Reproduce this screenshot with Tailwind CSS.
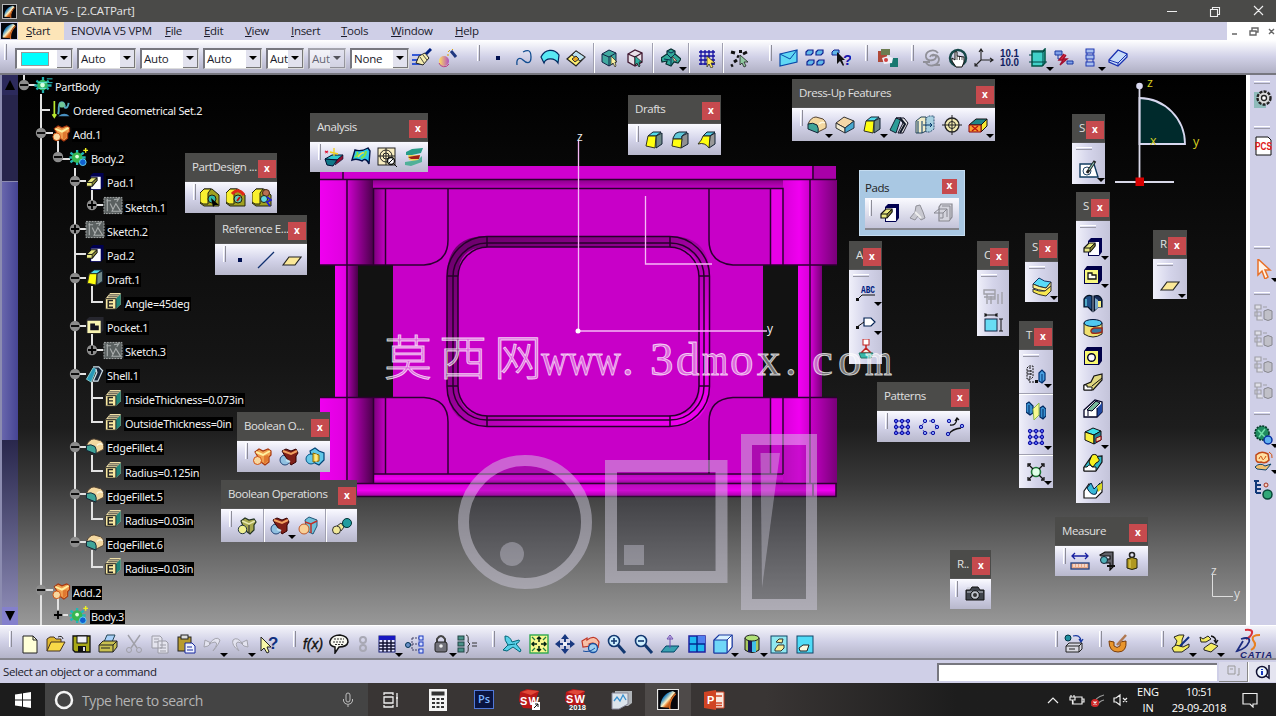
<!DOCTYPE html>
<html lang="en">
<head>
  <meta charset="UTF-8">
  <meta name="viewport" content="width=device-width, initial-scale=1.0">
  <title>CATIA V5 - [2.CATPart]</title>
  <script src="https://cdn.jsdelivr.net/npm/@tailwindcss/browser@4"></script>
</head>
<body class="bg-black overflow-hidden">

<!-- icon sprite -->
<svg class="absolute w-0 h-0" xmlns="http://www.w3.org/2000/svg">
  <defs>
    <linearGradient id="orb"><stop offset="0" stop-color="#ffe060"/><stop offset="1" stop-color="#b050c0"/></linearGradient>
    <linearGradient id="flame" x1="0" y1="0" x2="1" y2="1"><stop offset="0" stop-color="#001828"/><stop offset=".3" stop-color="#2080c0"/><stop offset=".5" stop-color="#fff0c0"/><stop offset=".62" stop-color="#e07020"/><stop offset="1" stop-color="#200800"/></linearGradient>
  </defs>
  <symbol id="app" viewBox="0 0 20 20"><rect width="20" height="20" fill="#05060c"/><path d="M2 18C2 10 6 3 15 1L18 3C13 7 11 13 12 19Z" fill="url(#flame)"/><path d="M12 20C11 13 14 8 18 4" stroke="#d86820" stroke-width="1.500" fill="none"/></symbol>
  <symbol id="brush" viewBox="0 0 20 20"><path d="M0 7H9M0 12H7M0 16H12" stroke="#0030d0" stroke-width="1.5"/><path d="M7 8L13 5L17 10L11 17L4 15Z" fill="#f4ecb0" stroke="#222"/><path d="M8 9L12 15M11 7L15 12" stroke="#222" stroke-width=".8"/><path d="M14 6L19 1" stroke="#002080" stroke-width="3"/></symbol>
  <symbol id="wand" viewBox="0 0 20 20"><circle cx="6" cy="13" r="5" fill="url(#orb)"/><path d="M1 15a5.5 5.5 0 0 0 10 1" stroke="#c04080" fill="none"/><path d="M13 3L18 9" stroke="#203880" stroke-width="3"/><path d="M10 4L12 2M9 7L11 7M14 1L15 2" stroke="#d8a000"/></symbol>
  <symbol id="dot" viewBox="0 0 20 20"><rect x="8" y="8" width="4" height="4" fill="#001050"/></symbol>
  <symbol id="curve" viewBox="0 0 20 20"><path d="M3 17C2 10 6 9 9 12S17 17 17 9S13 2 9 4" fill="none" stroke="#104c90" stroke-width="1.3"/></symbol>
  <symbol id="patch" viewBox="0 0 20 20"><path d="M1 9C5 1 14 0 19 7L18 15C15 10 6 9 4 15Z" fill="#58e8f4" stroke="#002860" stroke-width="1.2"/></symbol>
  <symbol id="diamond" viewBox="0 0 20 20"><path d="M1 11L10 3L19 9L10 18Z" fill="#fff070" stroke="#222" stroke-width="1.200"/><path d="M10 3L19 9L14 13L6 7Z" fill="#b8e0f0" stroke="#333"/><path d="M6 11L10 8L13 11L9 14Z" fill="#e8a820" stroke="#333"/></symbol>
  <symbol id="cubesel" viewBox="0 0 20 20"><path d="M3 6L10 2L17 5V14L10 18L3 14Z" fill="#40a8a0" stroke="#124" /><path d="M3 6L10 9L17 5M10 9V18" stroke="#124" fill="none"/><path d="M12 8V17L14 15L16 19L17 18L16 14H18Z" fill="#f8f0a0" stroke="#222" stroke-width=".7"/></symbol>
  <symbol id="cubewire" viewBox="0 0 20 20"><path d="M3 6L10 2L17 5V14L10 18L3 14Z" fill="#e8e0e8" stroke="#401830" stroke-width="1.3"/><path d="M3 6L10 9L17 5M10 9V18" stroke="#401830" fill="none" stroke-width="1.2"/><path d="M10 8V17L12 15L14 19L15 18L14 14H17Z" fill="#30b0a0" stroke="#111" stroke-width=".7"/></symbol>
  <symbol id="crossbody" viewBox="0 0 20 20"><path d="M0 10L6 6V3L10 1L14 3V6L20 11L17 15L13 14L10 18L5 16L6 13L1 14Z" fill="#30a898" stroke="#063030" stroke-width="1.2"/><path d="M6 3L10 5L14 3M6 6L10 10L14 6M3 11L9 12M10 10V17" stroke="#0a2c50" fill="none"/><path d="M11 8L16 13L13 13Z" fill="#f8d0b0" stroke="#222" stroke-width=".6"/></symbol>
  <symbol id="gridsel" viewBox="0 0 20 20"><path d="M4 2V17M8 2V17M12 2V17M16 2V17M2 4H18M2 8H18M2 12H18M2 16H18" stroke="#1410a0" stroke-width="1.3"/><path d="M10 8V19L12 16L14 20L16 19L14 15H18Z" fill="#ffe860" stroke="#222" stroke-width=".7"/></symbol>
  <symbol id="points" viewBox="0 0 20 20"><path d="M1 4L5 5M7 8L9 9M13 6L17 4M4 14L7 12M1 18L3 17" stroke="#111" stroke-width="3"/><rect x="9" y="2" width="3" height="3" fill="#111"/><path d="M10 7V17L12 15L14 19L16 18L14 14H18Z" fill="#90c8a0" stroke="#222" stroke-width=".8"/></symbol>
  <symbol id="mail" viewBox="0 0 20 20"><path d="M1 6L18 2V14L1 18Z" fill="#60d8f4" stroke="#0848a8" stroke-width="1.2"/><path d="M1 6L11 11L18 2" fill="none" stroke="#0848a8"/></symbol>
  <symbol id="blocks" viewBox="0 0 20 20"><g fill="#60b8e8" stroke="#102090" stroke-width="1.2"><path d="M1 4L3 2H8V5L6 7H1ZM11 4L13 2H18V5L16 7H11ZM2 14L4 12H9V15L7 17H2ZM12 14L14 12H19V15L17 17H12Z"/></g></symbol>
  <symbol id="whats" viewBox="0 0 20 20"><path d="M1 4L3 2H8V5L6 7H1Z" fill="#60b8e8" stroke="#102090"/><path d="M6 4V16L9 13L12 18L13 17L11 12H14Z" fill="#111"/><text x="12" y="17" font-family="Liberation Sans" font-weight="bold" font-size="15" fill="#1818b0">?</text></symbol>
  <symbol id="colors" viewBox="0 0 20 20"><rect x="-1" y="3" width="10" height="11" fill="#b04838"/><rect x="3" y="1" width="9" height="6" fill="#6c7c50"/><rect x="12" y="10" width="9" height="9" fill="#187870"/><path d="M4 10L10 8L15 10L14 15L6 16Z" fill="#f0f0f8"/><circle cx="8" cy="12" r="2" fill="#d04040"/></symbol>
  <symbol id="swirl" viewBox="0 0 20 20"><path d="M16 5C12 0 3 3 4 9C5 14 15 13 14 8C13 6 9 6 8 9M4 15C8 20 17 17 17 11C16 6 12 7 10 8M1 14H8M12 17H18" fill="none" stroke="#909098" stroke-width="1.8"/></symbol>
  <symbol id="hand" viewBox="0 0 20 20"><circle cx="10" cy="10" r="8" fill="none" stroke="#164848" stroke-width="2.500"/><path d="M4 10L7 12V4Q8 3 9 4V8L16 9V14L14 19H8L4 13Z" fill="#fff" stroke="#111"/><path d="M9 8V12M11.500 8V12M14 9V12" stroke="#111" stroke-width=".7"/></symbol>
  <symbol id="axis" viewBox="0 0 20 20"><path d="M7 2V12H18M7 12L1 18M5 4L7 1L9 4M16 10L19 12L16 14M1 15V18H4" fill="none" stroke="#222" stroke-width="1.1"/></symbol>
  <symbol id="tens" viewBox="0 0 20 20"><g font-family="Liberation Sans" font-weight="bold" font-size="10" fill="#102060"><text x="0" y="9" textLength="19" lengthAdjust="spacingAndGlyphs">10.1</text><text x="0" y="18" textLength="19" lengthAdjust="spacingAndGlyphs">10.0</text></g></symbol>
  <symbol id="tealbox" viewBox="0 0 20 20"><path d="M4 3H15L17 1V15L14 18H4Z" fill="#40d0c8" stroke="#054" stroke-width="1.5"/><path d="M4 4H15V18M1 7H4M1 14H19M15 4L17 2" stroke="#044" fill="none"/></symbol>
  <symbol id="cable" viewBox="0 0 20 20"><path d="M1 3H8V7H1ZM13 13H19V16H13Z" fill="#80a0e8" stroke="#1838a0"/><path d="M4 7V11H7" stroke="#1838a0" fill="none"/><path d="M10 6L5 12H9L6 17L13 11H9L12 7" stroke="#a01030" stroke-width="1.400" fill="#e03040"/></symbol>
  <symbol id="stack" viewBox="0 0 20 20"><path d="M7 4V16M13 4V16" stroke="#2038b0"/><g fill="#a8c0f0" stroke="#2038b0"><rect x="6" y="1" width="8" height="4"/><rect x="6" y="7" width="8" height="4"/><rect x="6" y="14" width="8" height="4"/></g></symbol>
  <symbol id="eraser" viewBox="0 0 20 20"><path d="M1 12L10 2L19 6V9L10 18L1 14Z" fill="#c8dcf8" stroke="#1830b0" stroke-width="1.3"/><path d="M1 12L10 15L19 6M10 15V18" fill="none" stroke="#1830b0"/></symbol>

  <symbol id="gear" viewBox="0 0 20 20"><path d="M10 1V18M3 5L16 14M3 14L16 5M1 10H19" stroke="#20b0b0" stroke-width="2.400"/><circle cx="9.500" cy="9.500" r="5.500" fill="#30b860"/><circle cx="9.500" cy="9.500" r="2.500" fill="#d8ffe0"/><path d="M5 7H14M6 13H13" stroke="#70e8e8"/><path d="M14 3H20M15 7H20" stroke="#30c8c8"/></symbol>
  <symbol id="gear2" viewBox="0 0 20 20"><path d="M8 2V18M1 5L15 15M1 15L15 5M0 10H17" stroke="#20b8b8" stroke-width="2.400"/><circle cx="8" cy="10" r="5.500" fill="#38b850"/><circle cx="8" cy="9" r="2" fill="#e0ffe0"/><circle cx="14" cy="15" r="3.500" fill="#1060d0" stroke="#60d0f0"/><path d="M17 0V5M14.500 2.500H19.500" stroke="#f0f020" stroke-width="1.500"/></symbol>
  <symbol id="ogs" viewBox="0 0 20 20"><path d="M3 1V17M1 15L3 18L5 15" stroke="#b8e830" stroke-width="1.8" fill="none"/><path d="M7 15C9 8 6 6 9 3Q13 1 14 6C13 9 17 10 18 3" stroke="#50a8c0" stroke-width="2" fill="none"/><circle cx="11" cy="5" r="3" fill="#70c898"/><path d="M7 17Q14 12 19 17Z" fill="#4890c0"/></symbol>
  <symbol id="add" viewBox="0 0 20 20"><path d="M3 5L7 2L11 4L16 2L19 4V8L17 10V15L13 18L9 15L6 10Z" fill="#f0a050" stroke="#a83810" stroke-width="1.200"/><path d="M4 5L11 8L18 4" stroke="#fff0a0" stroke-width="2" fill="none"/><path d="M12 9V17L16 14V8Z" fill="#e07830"/><circle cx="5.500" cy="13.500" r="4" fill="#f8d8a0" stroke="#d05010"/></symbol>
  <symbol id="pad" viewBox="0 0 20 20"><path d="M5 4L8 1H19V15L16 19H5Z" fill="#000050"/><path d="M6 5H16V18H6Z" fill="#fcfcff"/><path d="M1 11L6 6H12V9L7 15H1Z" fill="#e8e880" stroke="#111" stroke-width="1.200"/><path d="M1 11H7L12 6" stroke="#111" fill="none"/><path d="M7 11L12 6.500V9L7 15Z" fill="#888838" stroke="#111" stroke-width=".8"/></symbol>
  <symbol id="sketch" viewBox="0 0 20 20"><rect x="0.500" y="1.500" width="19" height="17" fill="#5a6060" stroke="#a8acac" stroke-dasharray="2 1"/><path d="M3 5H8M4 3V16M7 8L10 14M9 16L13 8L18 16ZM11 4L16 3L14 6" stroke="#a8acac" fill="none" stroke-width="1.200"/></symbol>
  <symbol id="draft" viewBox="0 0 20 20"><path d="M4 6L9 2H17L12 6Z" fill="#50d8e8" stroke="#123"/><path d="M12 6L18 3V14L12 18Z" fill="#708888" stroke="#123"/><path d="M4 6H12L11 18L2 16Z" fill="#ffff10" stroke="#332"/></symbol>
  <symbol id="draft2" viewBox="0 0 20 20"><path d="M3 8Q5 2 9 2H17L12 6V9H3Z" fill="#60c8d8" stroke="#123"/><path d="M12 6L18 3V14L11 18Z" fill="#909090" stroke="#123"/><path d="M3 9H12L11 18L2 16Z" fill="#ffff10" stroke="#332"/></symbol>
  <symbol id="draft3" viewBox="0 0 20 20"><path d="M6 6L10 2H18L13 6Z" fill="#50c8e0" stroke="#123"/><path d="M13 6L18 3V14L12 18Z" fill="#989898" stroke="#123"/><path d="M6 6H13L12 18Q8 12 1 14Q5 10 6 6Z" fill="#ffff10" stroke="#332"/></symbol>
  <symbol id="param" viewBox="0 0 20 20"><path d="M2 7L7 1H18V13L13 18H2Z" fill="#f0e0a8"/><path d="M13 7L18 2V13L13 18Z" fill="#20887c"/><path d="M5 5H15M6 3H17" stroke="#444"/><path d="M2 7H13V18H2Z" fill="#f8e8a0" stroke="#222"/><path d="M10 9H5V16H10M5 12.500H10" stroke="#222" fill="none" stroke-width="1.500"/></symbol>
  <symbol id="pocket" viewBox="0 0 20 20"><path d="M1 4L4 1H19V15L16 18H1Z" fill="#26262e"/><path d="M2 5H16V18H2Z" fill="#f8f4b0"/><path d="M5 8H10V10H14V15H5Z" fill="#14141c"/></symbol>
  <symbol id="pocketb" viewBox="0 0 20 20"><path d="M1 5L4 1H19V15L16 19H1Z" fill="#000048"/><path d="M2 5H15V18H2Z" fill="#f8f880"/><path d="M5 8H9V10H13V14H5Z" fill="#fffff0" stroke="#111" stroke-width="1.300"/></symbol>
  <symbol id="shell" viewBox="0 0 20 20"><path d="M1 15L8 3H12L6 18Z" fill="#2898b8" stroke="#8cc"/><path d="M8 2H14L18 6L13 17H8L12 8L11 4" fill="#182438" stroke="#d0e0e8" stroke-width="1.300"/></symbol>
  <symbol id="shell2" viewBox="0 0 20 20"><path d="M1 15L7 3H12L7 18Z" fill="#2c9c98" stroke="#123"/><path d="M7 3H15L19 8L14 18H9L14 8L12 5Z" fill="#e8e8e8" stroke="#112"/><path d="M11 3L16 9L11 18" stroke="#101828" stroke-width="2" fill="none"/></symbol>
  <symbol id="fillet" viewBox="0 0 20 20"><path d="M1 9Q4 2 9 2L16 4Q20 7 19 13L11 17Z" fill="#f4d8a0" stroke="#543"/><path d="M1 9Q6 7 10 10Q12 13 11 18L1 14Z" fill="#40a498" stroke="#123"/><path d="M12 9Q15 6 18 8" stroke="#fff8e0" stroke-width="1.500" fill="none"/></symbol>
  <symbol id="chamfer" viewBox="0 0 20 20"><path d="M1 8L9 2L19 6L10 13Z" fill="#f4d8a8" stroke="#333"/><path d="M1 8L10 13V18L1 13Z" fill="#f0e8d0" stroke="#333"/><path d="M10 13L19 6V13L10 18Z" fill="#48a8d0" stroke="#234"/></symbol>
  <symbol id="thick" viewBox="0 0 20 20"><path d="M1 6L6 2H11V16L7 18H1Z" fill="#f0ecc8" stroke="#245"/><path d="M11 3L14 1H19V14L15 17H11Z" fill="#a8d0e0" stroke="#357" stroke-dasharray="2 1"/><path d="M3 6V18M7 6V18M8 10H17M15 8L17 10L15 12" stroke="#036" fill="none"/></symbol>
  <symbol id="thread" viewBox="0 0 20 20"><circle cx="10" cy="10" r="7" fill="#f4ecb0" stroke="#222" stroke-width="1.300"/><circle cx="10" cy="10" r="3.500" fill="none" stroke="#222"/><path d="M10 0V20M0 10H20" stroke="#222"/></symbol>
  <symbol id="removeface" viewBox="0 0 20 20"><path d="M1 10L8 4H19L13 10Z" fill="#208888" stroke="#111"/><path d="M13 10L19 4V11L13 17Z" fill="#f8e830" stroke="#111"/><path d="M1 10H13V17H1Z" fill="#f8a030" stroke="#801"/><path d="M4 11L10 16M10 11L4 16" stroke="#c01010" stroke-width="1.300"/></symbol>
  <symbol id="pd1" viewBox="0 0 20 20"><path d="M0 5L4 1H12L19 7V18H4L0 15Z" fill="#a0a020" stroke="#221"/><path d="M0 5L4 1H11L8 5V16H3L0 14Z" fill="#f8f030" stroke="#221"/><circle cx="12" cy="11" r="4" fill="#30b8a8" stroke="#221"/><path d="M11 10L19 17L15 17L13 19Z" fill="#000"/></symbol>
  <symbol id="pd2" viewBox="0 0 20 20"><path d="M0 5L4 1H12L19 7V18H4L0 15Z" fill="#a0a020" stroke="#221"/><path d="M0 5L4 1H11L8 5V16H3L0 14Z" fill="#f8f030" stroke="#221"/><circle cx="12" cy="11" r="4" fill="#60c8b8" stroke="#221"/><path d="M6 6Q12 -1 18 7" stroke="#e02818" stroke-width="3" fill="none"/><path d="M11 13L14 9" stroke="#c01010" stroke-width="2"/></symbol>
  <symbol id="pd3" viewBox="0 0 20 20"><path d="M0 5L4 1H12L19 7V18H4L0 15Z" fill="#a0a020" stroke="#221"/><path d="M0 5L4 1H11L8 5V16H3L0 14Z" fill="#f8f030" stroke="#221"/><circle cx="14" cy="5" r="3.500" fill="#b87050" stroke="#421"/><circle cx="12" cy="11" r="3.500" fill="#60d8e0" stroke="#221"/><path d="M15 9L19 12L15 14L18 18" stroke="#2020d0" stroke-width="1.800" fill="none"/></symbol>
  <symbol id="line" viewBox="0 0 20 20"><path d="M2 18L18 2" stroke="#103070" stroke-width="1.300"/></symbol>
  <symbol id="plane" viewBox="0 0 20 20"><path d="M1 15L7 7H19L13 15Z" fill="#fbe898" stroke="#222" stroke-width="1.200"/></symbol>
  <symbol id="an1" viewBox="0 0 20 20"><path d="M1 12L8 8H19L13 13Z" fill="#30c8d0" stroke="#013"/><path d="M1 12L13 13L9 19L3 18Z" fill="#107888" stroke="#013"/><path d="M13 13L19 8V12L11 18Z" fill="#901030" stroke="#013" stroke-width=".6"/><path d="M1 4L4 6M4 4L1 6" stroke="#e02040" stroke-width="1.400"/><path d="M10 1V9M6 5L14 7" stroke="#f0d020" stroke-width="1.300"/></symbol>
  <symbol id="an2" viewBox="0 0 20 20"><path d="M1 13L4 3Q10 5 17 1L19 4L18 17Q15 10 11 14Q6 11 1 13Z" fill="#30c8e8" stroke="#014" stroke-width="1.400"/><path d="M4 10Q8 8 6 5M10 11Q15 9 15 4" stroke="#80e840" stroke-width="2" fill="none"/><path d="M7 10Q11 5 13 6" stroke="#f8e040" stroke-width="1.500" fill="none"/></symbol>
  <symbol id="an3" viewBox="0 0 20 20"><rect x="1" y="1" width="17" height="17" fill="#f8ecc0" stroke="#222"/><circle cx="9" cy="9" r="6" fill="none" stroke="#222"/><circle cx="9" cy="9" r="3" fill="none" stroke="#222"/><path d="M9 1V18M1 9H18" stroke="#222"/><circle cx="14" cy="14" r="3.500" fill="#fff" stroke="#111" stroke-width="1.400"/><path d="M12 16L16 12M17 17L20 20" stroke="#111"/></symbol>
  <symbol id="an4" viewBox="0 0 20 20"><path d="M2 5L8 2L19 1L17 6L8 8L2 8Z" fill="#289c88" /><path d="M4 8H16L14 15L5 13Z" fill="#e8d860"/><path d="M4 10L16 8L15 12H7Z" fill="#a02018"/><path d="M1 15L14 13L18 9V15L7 19L1 18Z" fill="#50b098"/></symbol>
  <symbol id="assem" viewBox="0 0 20 20"><path d="M4 5L8 2L12 4L17 3L19 6L17 9V14L13 18L9 15L6 10Z" fill="#a8a850" stroke="#232" stroke-width="1.200"/><path d="M5 5L12 8L18 5" stroke="#e8e8b0" stroke-width="1.500" fill="none"/><path d="M12 9V17" stroke="#223"/><circle cx="5.500" cy="13.500" r="4.200" fill="#f0f090" stroke="#234"/></symbol>
  <symbol id="remove" viewBox="0 0 20 20"><circle cx="6" cy="13" r="5" fill="#90c0e0" stroke="#247"/><path d="M3 4L7 2L12 4L17 2L19 6L17 9V15L12 18L9 13L6 9Z" fill="#802018" stroke="#300"/><path d="M4 4L12 7L18 4" stroke="#f0a060" stroke-width="2" fill="none"/><path d="M7 13L11 15" stroke="#c0e0f0" stroke-width="2"/></symbol>
  <symbol id="intersect" viewBox="0 0 20 20"><path d="M5 4L10 1L14 4L19 6V13L14 18L8 15Z" fill="#60c8e8" stroke="#047" stroke-width="1.200"/><circle cx="6" cy="12" r="5" fill="#68c8e8" stroke="#058"/><path d="M8 6L14 8V14L8 15Z" fill="#f8d850" stroke="#860"/><path d="M11 7V15" stroke="#fff8c0"/></symbol>
  <symbol id="uniontrim" viewBox="0 0 20 20"><path d="M7 4L11 1L19 4V10L15 18L9 15Z" fill="#70c0d8" stroke="#257"/><path d="M7 6L13 8L19 5M13 8V17" stroke="#c03028" stroke-width="1.500" fill="none"/><circle cx="6" cy="13" r="5" fill="#f8d098" stroke="#c05828"/></symbol>
  <symbol id="lump" viewBox="0 0 20 20"><path d="M5 10L9 7L12 11L9 15Z" fill="#f0e898" stroke="#333"/><circle cx="4.500" cy="14" r="4" fill="#f0e898" stroke="#333"/><path d="M10 8L14 4L18 9L13 12Z" fill="#208c90"/><circle cx="15" cy="7" r="4.500" fill="#209ca0" stroke="#033"/></symbol>
  <symbol id="padgray" viewBox="0 0 20 20"><path d="M3 15L8 9L9 3L13 2L16 9L18 15L14 17L11 13L8 17Z" fill="#c8c8d0" stroke="#909098"/><path d="M8 9L14 15" stroke="#eee" stroke-width="2"/></symbol>
  <symbol id="multigray" viewBox="0 0 20 20"><path d="M6 4L8 1H19V14L16 18H6Z" fill="#d4d4dc" stroke="#888890" stroke-width="1.200"/><path d="M1 10L6 6H14V14M1 10H10V15H7M10 10L14 6M9 3H17V16" stroke="#888890" fill="none"/></symbol>
  <symbol id="abc" viewBox="0 0 20 20"><text x="5" y="10" font-family="Liberation Mono" font-weight="bold" font-size="10" textLength="14" lengthAdjust="spacingAndGlyphs" fill="#002080">ABC</text><path d="M6 12H19M6 12L1 17" stroke="#111" fill="none"/><rect x="0" y="15" width="3" height="3" fill="#111"/></symbol>
  <symbol id="tag" viewBox="0 0 20 20"><path d="M8 6H15L19 10L15 14H8Z" fill="#fff" stroke="#002050" stroke-width="1.200"/><path d="M8 10L1 15" stroke="#111"/><rect x="0" y="14" width="3" height="3" fill="#111"/></symbol>
  <symbol id="stamp" viewBox="0 0 20 20"><rect x="7" y="0" width="6" height="6" fill="#fff" stroke="#c02020"/><path d="M10 6V9M5 14L10 9L15 14Z" stroke="#c02020" stroke-width="1.500" fill="#f8f0e0"/><path d="M3 14H17L15 19H5Z" fill="#38b8a8" stroke="#276"/></symbol>
  <symbol id="cgray" viewBox="0 0 20 20"><path d="M1 3H12V7H1ZM4 7V17M8 9V17M12 3V12H5M15 7V17M19 5V17M1 10H12" stroke="#a0a0a8" fill="none" stroke-width="1.400"/></symbol>
  <symbol id="cbox" viewBox="0 0 20 20"><rect x="2" y="6" width="12" height="12" fill="#68dcf4" stroke="#124"/><path d="M2 4V0M14 4V0M2 2H14M16 6H20M16 18H20M18 6V18M4 1L2 2L4 3M12 1L14 2L12 3" stroke="#111" fill="none"/></symbol>
  <symbol id="layers2" viewBox="0 0 20 20"><path d="M1 7L7 1Q12 5 19 5L14 11Q7 10 1 7Z" fill="#58dcf8" stroke="#136"/><path d="M1 7Q7 10 14 11L19 5V9L13 14Q6 13 1 11Z" fill="#fff088" stroke="#333"/><path d="M1 12Q7 15 13 14L19 9V14L14 19Q6 18 1 15Z" fill="#f8e850" stroke="#333"/></symbol>
  <symbol id="sketcher" viewBox="0 0 20 20"><path d="M1 5H15L19 18H1Z" fill="#fff" stroke="#123c60" stroke-width="1.400"/><circle cx="8" cy="12" r="4" fill="none" stroke="#246"/><path d="M8 14L16 2" stroke="#222" stroke-width="3"/><path d="M10 11L15 3.500" stroke="#8cc8b8" stroke-width="1.200"/></symbol>
  <symbol id="shaft" viewBox="0 0 20 20"><path d="M1 6Q4 1 9 3V18L5 14H1Z" fill="#205088" stroke="#012" stroke-width="1.200"/><path d="M11 3Q17 1 19 7V14L15 14L11 18Z" fill="#182c58" stroke="#012" stroke-width="1.200"/><path d="M12 5L15 7V15L12 17Z" fill="#78a8c8"/><path d="M15 8H18V14H15Z" fill="#f8f080"/><path d="M3 6V13" stroke="#60c8d8" stroke-width="1.500"/></symbol>
  <symbol id="groove" viewBox="0 0 20 20"><path d="M1 4V15Q10 21 19 15V4Z" fill="#f0e070" stroke="#222"/><ellipse cx="10" cy="4" rx="9" ry="3.500" fill="#50c8f0" stroke="#013"/><path d="M19 9H11Q6 11 9 14Q14 15 19 13Z" fill="#3878a0" stroke="#a02818" stroke-width="1.400"/></symbol>
  <symbol id="hole" viewBox="0 0 20 20"><path d="M1 5L4 1H19V15L16 19H1Z" fill="#000048"/><path d="M2 5H15V18H2Z" fill="#f8f870"/><circle cx="8.500" cy="11.500" r="3.800" fill="#f8f8ff" stroke="#002" stroke-width="1.400"/></symbol>
  <symbol id="rib" viewBox="0 0 20 20"><path d="M1 12L8 9L11 3L19 1V7L10 17H1Z" fill="#e0d880" stroke="#111" stroke-width="1.200"/><path d="M1 12H4V14H9V17H1Z" fill="#fff" stroke="#111"/><path d="M9 13L19 5" stroke="#111" fill="none"/></symbol>
  <symbol id="slot" viewBox="0 0 20 20"><path d="M1 11L12 1L19 3V13L14 18H1Z" fill="#fff" stroke="#002" stroke-width="1.300"/><path d="M4 11L13 2L17 4L9 12Z" fill="#78b898" stroke="#002"/><path d="M14 9L19 4V13L14 18Z" fill="#2048a0"/><path d="M5 11V17M14 9V18" stroke="#002"/></symbol>
  <symbol id="stiff" viewBox="0 0 20 20"><path d="M2 6L10 2L18 5L11 9Z" fill="#40e0e8" stroke="#111"/><path d="M2 6L11 9V18L2 14Z" fill="#f8f040" stroke="#111"/><path d="M11 9L18 5V14L11 18Z" fill="#208898" stroke="#111"/><path d="M13 12L18 10V14L13 16Z" fill="#f0d0a0" stroke="#801"/></symbol>
  <symbol id="loft" viewBox="0 0 20 20"><path d="M1 14L8 4L19 3V9L13 18H1Z" fill="#30b8c8" stroke="#111" stroke-width="1.200"/><path d="M6 9L9 2Q14 0 15 5Q18 8 13 10L10 14Q7 13 6 9Z" fill="#f8f020" stroke="#111"/><path d="M1 14H4Q7 10 9 14H13V18H1Z" fill="#fff" stroke="#111"/></symbol>
  <symbol id="loft2" viewBox="0 0 20 20"><path d="M1 11L6 4L9 11L13 12L19 2V12L13 18H1Z" fill="#fff" stroke="#111" stroke-width="1.200"/><path d="M4 8L8 3L11 9L17 3L13 14Q8 16 4 8Z" fill="#38b8d8" stroke="#024"/><path d="M14 6L19 3V9L15 12Z" fill="#d8d820"/></symbol>
  <symbol id="trans" viewBox="0 0 20 20"><path d="M1 3L3 1H7V12L5 14H1ZM1 6H7M1 9H7M4 2V14M3 14V17H9" fill="none" stroke="#111" stroke-dasharray="2 1"/><rect x="9" y="15" width="3" height="3" fill="#111"/><path d="M13 8L16 5L19 8V15L16 18L13 16Z" fill="#48a0e0" stroke="#013070" stroke-width="1.200"/><path d="M16 9V18" stroke="#013070"/></symbol>
  <symbol id="mirror" viewBox="0 0 20 20"><path d="M0 3L3 1L7 5V12L4 14L0 11ZM14 7L17 5L20 8V15L17 18L14 16Z" fill="#3890d0" stroke="#012860" stroke-width="1.200"/><path d="M3 4V13M17 8V17" stroke="#012860"/><path d="M7 8L13 2V14L8 19Z" fill="#f8f890" stroke="#8cb850"/></symbol>
  <symbol id="grid9" viewBox="0 0 20 20"><path d="M4 3V17M10 3V17M16 3V17M3 4H17M3 10H17M3 16H17" stroke="#2020b0"/><g fill="#5060f0" stroke="#1010a0"><circle cx="4" cy="4" r="1.700"/><circle cx="10" cy="4" r="1.700"/><circle cx="16" cy="4" r="1.700"/><circle cx="4" cy="10" r="1.700"/><circle cx="10" cy="10" r="1.700"/><circle cx="16" cy="10" r="1.700"/><circle cx="4" cy="16" r="1.700"/><circle cx="10" cy="16" r="1.700"/><circle cx="16" cy="16" r="1.700"/></g></symbol>
  <symbol id="circpat" viewBox="0 0 20 20"><path d="M6 4H14L18 10L14 16H6L2 10Z" fill="none" stroke="#4050c0" stroke-dasharray="2 2"/><g fill="#80a0f8" stroke="#1010a0"><circle cx="6" cy="4" r="1.700"/><circle cx="14" cy="4" r="1.700"/><circle cx="18" cy="10" r="1.700"/><circle cx="14" cy="16" r="1.700"/><circle cx="6" cy="16" r="1.700"/><circle cx="2" cy="10" r="1.700"/></g></symbol>
  <symbol id="userpat" viewBox="0 0 20 20"><path d="M5 8Q11 9 12 2M10 4L12 1L14 3M4 17Q7 12 16 11" stroke="#111" fill="none" stroke-width="1.300"/><g fill="#80a0f8" stroke="#1010a0"><circle cx="4" cy="4" r="1.700"/><circle cx="17" cy="9" r="1.700"/><circle cx="3" cy="17" r="1.700"/></g></symbol>
  <symbol id="scale" viewBox="0 0 20 20"><circle cx="10" cy="10" r="4.500" fill="#e0ffe8" stroke="#207838" stroke-width="1.600"/><path d="M3 3L7 7M17 3L13 7M3 17L7 13M17 17L13 13M2 5V2H5M15 2H18V5M18 15V18H15M5 18H2V15" stroke="#111" fill="none" stroke-width="1.300"/></symbol>
  <symbol id="measure" viewBox="0 0 20 20"><path d="M2 5H18M5 2L2 5L5 8M15 2L18 5L15 8" stroke="#1820a0" stroke-width="1.300" fill="none"/><rect x="1" y="12" width="18" height="6" fill="#e8a888" stroke="#204080" stroke-width="1.300"/><path d="M4 13V16M7 13V16M10 13V16M13 13V16M16 13V16" stroke="#fff"/></symbol>
  <symbol id="caliper" viewBox="0 0 20 20"><path d="M3 4L8 1H16V16L13 19V12H9V8H13V5H4Z" fill="#606068" stroke="#111" stroke-width="1.200"/><circle cx="7" cy="9" r="3.500" fill="#50b0b8" stroke="#123"/><path d="M10 15H18" stroke="#111" stroke-width="2"/></symbol>
  <symbol id="weight" viewBox="0 0 20 20"><circle cx="10" cy="4" r="2.500" fill="none" stroke="#222" stroke-width="1.600"/><path d="M5 8Q10 5 15 8V17Q10 20 5 17Z" fill="#b09820" stroke="#221"/><path d="M8 9V17" stroke="#e8d860"/></symbol>
  <symbol id="camera" viewBox="0 0 20 20"><path d="M1 6H5L7 3H13L15 6H19V16H1Z" fill="#40444c" stroke="#111"/><path d="M2 8H18M2 4H5" stroke="#c8ccd4"/><circle cx="10" cy="11" r="4.300" fill="#c0c4cc" stroke="#111"/><circle cx="10" cy="11" r="2" fill="#333"/></symbol>

  <symbol id="wheel" viewBox="0 0 20 20"><rect x="1" y="3" width="12" height="16" fill="#50a890" fill-opacity=".5"/><circle cx="11" cy="9" r="6.500" fill="#d8d8d8" stroke="#222" stroke-width="2.400" stroke-dasharray="3 1.200"/><circle cx="11" cy="9" r="2.500" fill="#fff" stroke="#222" stroke-width="1.300"/></symbol>
  <symbol id="pcs" viewBox="0 0 20 20"><path d="M3 1H15L18 4V19H3Z" fill="#fff" stroke="#111"/><text x="2" y="14" font-family="Liberation Sans" font-weight="bold" font-size="10" textLength="17" fill="#e01818" lengthAdjust="spacingAndGlyphs">PCS</text></symbol>
  <symbol id="cursor" viewBox="0 0 20 20"><path d="M5 0V16L9 12L12 20L15 18L12 11H17Z" fill="#fff4e8" stroke="#e87028" stroke-width="1.500"/></symbol>
  <symbol id="treegray" viewBox="0 0 20 20"><path d="M2 2H8V6H2ZM2 9H8V13H2ZM4 6V17H10M10 4H14" stroke="#a0a0a8" fill="#e0e0e8" stroke-width="1.200"/><path d="M11 8Q15 5 19 8V16Q15 19 11 16Z" fill="#c0c0c8" stroke="#888890"/></symbol>
  <symbol id="gearpair" viewBox="0 0 20 20"><circle cx="9" cy="8" r="7" fill="#208c60" stroke="#073828" stroke-width="1.600" stroke-dasharray="2 1"/><path d="M5 5L12 12M12 4L6 12" stroke="#70e0a8" stroke-width="1.500"/><circle cx="15" cy="15" r="4" fill="#60b0f0" stroke="#0830a0" stroke-width="1.500"/></symbol>
  <symbol id="sheet" viewBox="0 0 20 20"><path d="M3 4Q8 -1 15 3L16 9Q13 13 8 11Q3 12 3 8Z" fill="#ffe0a0" stroke="#c04818" stroke-width="1.500"/><path d="M6 8Q8 3 9 7T13 5M16 1Q20 3 19 7" stroke="#d05010" fill="none"/><path d="M2 16Q7 11 12 15L18 13L13 19L4 18Z" fill="#f0c070" stroke="#146"/></symbol>
  <symbol id="treegear" viewBox="0 0 20 20"><path d="M1 1H6M3 1V13M3 5H8M3 9H8M3 13H8" stroke="#103878" stroke-width="2"/><circle cx="13" cy="5" r="2" fill="#f8d0c0" stroke="#a03020"/><circle cx="14.500" cy="14.500" r="4.500" fill="#30a878" stroke="#074838" stroke-width="1.500"/></symbol>

  <symbol id="new" viewBox="0 0 20 20"><path d="M3 2H13L17 6V19H3Z" fill="#ffffd8" stroke="#222"/><path d="M13 2V6H17" fill="none" stroke="#222"/></symbol>
  <symbol id="open" viewBox="0 0 20 20"><path d="M1 17V5L4 3H8L10 5H15V8" fill="#e0b830" stroke="#432"/><path d="M1 17L5 8H19L14 17Z" fill="#f8d848" stroke="#432"/><path d="M12 3Q16 1 17 5" stroke="#222" fill="none"/></symbol>
  <symbol id="save" viewBox="0 0 20 20"><path d="M1 2H18V18H3L1 16Z" fill="#a8a818" stroke="#111" stroke-width="1.300"/><rect x="5" y="2" width="10" height="7" fill="#f0f0f8" stroke="#111"/><rect x="6" y="12" width="8" height="6" fill="#111"/><rect x="11" y="13" width="2" height="4" fill="#ddd"/></symbol>
  <symbol id="print" viewBox="0 0 20 20"><path d="M6 8L9 1H17L14 8Z" fill="#a8d0f8" stroke="#245"/><path d="M1 11L5 7H19V13L15 18H1Z" fill="#c8c050" stroke="#222"/><path d="M1 11H15L19 7M15 11V18M3 14H12" stroke="#222" fill="none"/></symbol>
  <symbol id="cut" viewBox="0 0 20 20"><path d="M4 1L13 14M16 1L7 14" stroke="#a0a0a8" stroke-width="1.400"/><circle cx="5" cy="16" r="2.500" fill="none" stroke="#a0a0a8"/><circle cx="15" cy="16" r="2.500" fill="none" stroke="#a0a0a8"/></symbol>
  <symbol id="copy" viewBox="0 0 20 20"><path d="M2 2H10L12 4V14H2ZM8 7H16L18 9V19H8Z" fill="#e4e4ee" stroke="#9c9ca6"/><path d="M10 11H16M10 14H16M10 17H16M4 5H9M4 8H8" stroke="#9c9ca6"/></symbol>
  <symbol id="paste" viewBox="0 0 20 20"><rect x="2" y="3" width="13" height="14" fill="#b89c30" stroke="#222"/><rect x="5" y="1" width="7" height="4" fill="#ddd" stroke="#222"/><path d="M9 9H16L19 12V19H9Z" fill="#f0f4ff" stroke="#1828a0"/><path d="M11 13H16M11 16H17" stroke="#1828a0"/></symbol>
  <symbol id="undo" viewBox="0 0 20 20"><path d="M2 13L3 6L9 9L7 10Q14 1 18 6Q17 10 11 17Q17 9 13 8Q9 8 6 12Z" fill="#e4e4f0" stroke="#a4a4ae"/></symbol>
  <symbol id="redo" viewBox="0 0 20 20"><path d="M18 13L17 6L11 9L13 10Q7 2 3 6Q1 11 9 17Q4 9 8 8Q11 8 14 12Z" fill="#e4e4f0" stroke="#a4a4ae"/></symbol>
  <symbol id="help" viewBox="0 0 20 20"><path d="M2 3V17L5 14L8 19L10 18L8 13H12Z" fill="#f8f8a8" stroke="#222"/><text x="9" y="15" font-family="Liberation Sans" font-weight="bold" font-size="17" fill="#103080">?</text></symbol>
  <symbol id="fx" viewBox="0 0 20 20"><text x="0" y="15" font-family="Liberation Sans" font-style="italic" font-size="15" textLength="20" lengthAdjust="spacingAndGlyphs" fill="#111" stroke="#111" stroke-width=".4">f(x)</text></symbol>
  <symbol id="speech" viewBox="0 0 20 20"><path d="M1 7Q3 1 11 1Q19 2 19 8Q18 13 10 13L6 19L6 13Q0 12 1 7Z" fill="#f8f8f0" stroke="#111" stroke-width="1.500"/><path d="M5 5H15M4 8H16M6 10.500H14" stroke="#333" stroke-dasharray="2 1"/></symbol>
  <symbol id="chain" viewBox="0 0 20 20"><circle cx="10" cy="6" r="3" fill="none" stroke="#a8a8b4" stroke-width="2"/><circle cx="10" cy="14" r="3" fill="none" stroke="#a8a8b4" stroke-width="2"/></symbol>
  <symbol id="table" viewBox="0 0 20 20"><rect x="2" y="2" width="16" height="16" fill="#e8e8ff" stroke="#101870"/><rect x="2" y="2" width="16" height="4" fill="#1818c0"/><path d="M2 9H18M2 12H18M2 15H18M6 6V18M10 6V18M14 6V18" stroke="#101030" stroke-width="1.400"/></symbol>
  <symbol id="nodes" viewBox="0 0 20 20"><path d="M4 10H14M7 4V16M7 4H14M7 16H14" stroke="#446" stroke-dasharray="2 1"/><circle cx="3" cy="11" r="2.500" fill="#6890c8" stroke="#035"/><g fill="#d8e0ff" stroke="#1838c0"><rect x="14" y="2" width="4" height="4"/><rect x="14" y="8" width="4" height="4"/><rect x="14" y="15" width="4" height="4"/></g></symbol>
  <symbol id="lock" viewBox="0 0 20 20"><path d="M6 9V5Q10 -1 14 5V9" fill="none" stroke="#444" stroke-width="2"/><rect x="4" y="8" width="12" height="10" rx="2" fill="#707078" stroke="#222"/><circle cx="10" cy="12" r="1.800" fill="#eee"/></symbol>
  <symbol id="brace" viewBox="0 0 20 20"><g fill="#489088" stroke="#244"><rect x="1" y="2" width="6" height="4"/><rect x="1" y="8" width="6" height="4"/><rect x="1" y="14" width="6" height="4"/></g><path d="M9 1Q12 1 11 8L13 10L11 12Q12 19 9 19M15 9H20M15 12H20" stroke="#333" fill="none"/></symbol>
  <symbol id="fly" viewBox="0 0 20 20"><path d="M3 2Q8 2 10 8L17 6Q19 7 14 10L19 16L18 18L11 13L5 17L1 16L6 11Q2 6 3 2Z" fill="#58d0e8" stroke="#067"/><path d="M6 11L13 10" stroke="#067"/></symbol>
  <symbol id="fit" viewBox="0 0 20 20"><rect x="1" y="1" width="18" height="18" fill="#f8f890" stroke="#30a850" stroke-width="1.400"/><path d="M10 3V8M10 12V17M3 10H8M12 10H17M8 5L10 3L12 5M8 15L10 17L12 15M5 8L3 10L5 12M15 8L17 10L15 12" stroke="#021" fill="none" stroke-width="1.500"/><path d="M3 3L6 6M17 3L14 6M3 17L6 14M17 17L14 14" stroke="#208040" stroke-width="1.300"/></symbol>
  <symbol id="pan" viewBox="0 0 20 20"><path d="M10 3V17M3 10H17" stroke="#183880" stroke-width="2"/><path d="M10 0L14 5H6ZM10 20L6 15H14ZM0 10L5 6V14ZM20 10L15 14V6Z" fill="#183880"/><rect x="8" y="8" width="4" height="4" fill="#f0f0f8"/></symbol>
  <symbol id="rotate" viewBox="0 0 20 20"><path d="M1 7L6 4V6Q14 0 18 8L17 14Q15 7 8 10L9 12L2 13Z" fill="#f8c0a8" stroke="#c03828" stroke-width="1.200"/><circle cx="12" cy="14" r="4.500" fill="#a0d0f0" stroke="#1850a0" stroke-width="1.300"/><path d="M2 17Q8 19 14 14" stroke="#1850a0" fill="none"/></symbol>
  <symbol id="zoomin" viewBox="0 0 20 20"><circle cx="7" cy="7" r="5.500" fill="#d0f0ff" stroke="#123870" stroke-width="1.600"/><path d="M11 11L18 19" stroke="#123870" stroke-width="3"/><path d="M7 4V10M4 7H10" stroke="#123870" stroke-width="1.600"/></symbol>
  <symbol id="zoomout" viewBox="0 0 20 20"><circle cx="7" cy="7" r="5.500" fill="#d0f0ff" stroke="#123870" stroke-width="1.600"/><path d="M11 11L18 19" stroke="#123870" stroke-width="3"/><path d="M4 7H10" stroke="#123870" stroke-width="1.600"/></symbol>
  <symbol id="normal" viewBox="0 0 20 20"><path d="M1 18L6 12H19L14 18Z" fill="#38a0b0" stroke="#046"/><path d="M10 14V3M7 5L10 1L13 5Z" stroke="#7050b0" fill="#d0c8f0"/></symbol>
  <symbol id="quad" viewBox="0 0 20 20"><rect x="2" y="2" width="16" height="16" fill="#20b8f0" stroke="#2020a0" stroke-width="1.500"/><rect x="10" y="2" width="8" height="8" fill="#5080f0"/><path d="M10 2V18M2 10H18" stroke="#002890" stroke-width="1.500"/></symbol>
  <symbol id="cube" viewBox="0 0 20 20"><path d="M1 6L6 1H19V13L14 19H1Z" fill="#d8f0ff" stroke="#1838a0" stroke-width="1.200"/><path d="M14 6L19 1V13L14 19Z" fill="#fff" stroke="#1838a0"/><path d="M1 6H14V19H1Z" fill="#70d8f8" stroke="#1838a0"/></symbol>
  <symbol id="cyl" viewBox="0 0 20 20"><path d="M3 4V16Q10 21 17 16V4Z" fill="#a8c860" stroke="#111"/><rect x="6" y="6" width="4" height="12" fill="#181860"/><rect x="10" y="6" width="4" height="12" fill="#40c0e8"/><ellipse cx="10" cy="4" rx="7" ry="3" fill="#b0e078" stroke="#222"/></symbol>
  <symbol id="hide" viewBox="0 0 20 20"><rect x="2" y="2" width="16" height="17" fill="#90e8f0" stroke="#146"/><path d="M6 15L9 11H15V14L12 17H6ZM7 8L10 5H14L13 9Z" fill="#f8f098" stroke="#333"/></symbol>
  <symbol id="swap" viewBox="0 0 20 20"><rect x="2" y="2" width="16" height="17" fill="#50dcf8" stroke="#146"/><path d="M4 14L8 11H14L12 17H5Z" fill="#f8f8e0" stroke="#222"/></symbol>
  <symbol id="catalog" viewBox="0 0 20 20"><circle cx="4" cy="4" r="3" fill="#2090a0" stroke="#034"/><path d="M9 2Q16 0 17 7M15 5L17 8L19 5" stroke="#1838a0" stroke-width="1.300" fill="none"/><path d="M2 12L5 9H18V15L15 18H2Z" fill="#d8d8e0" stroke="#222"/><path d="M2 12H15L18 9M15 12V18M5 15H11" stroke="#222" fill="none"/></symbol>
  <symbol id="bowl" viewBox="0 0 20 20"><path d="M1 7L6 8V12Q9 15 12 12V8L18 7Q19 18 10 18Q1 18 1 7Z" fill="#e8952c" stroke="#7a3c08"/><path d="M9 11L18 1" stroke="#b07850" stroke-width="2.500"/></symbol>
  <symbol id="scroll" viewBox="0 0 20 20"><path d="M3 3L8 1H13L11 6V12H4L6 7Z" fill="#f4ec60" stroke="#222"/><path d="M1 14L5 11L12 13L18 10V13L11 18H3Z" fill="#f4ec60" stroke="#222"/><path d="M9 12L18 3" stroke="#103080" stroke-width="2"/></symbol>
  <symbol id="scroll2" viewBox="0 0 20 20"><path d="M1 3L4 5L9 2L12 5L7 8L2 8Z" fill="#f4ec60" stroke="#222"/><path d="M12 2Q17 3 17 8M15 6L17 9L19 6" stroke="#111" fill="none" stroke-width="1.300"/><path d="M5 14L12 9L19 12L12 18L5 16Z" fill="#f4ec60" stroke="#222"/></symbol>
</svg>

<div class="w-[1276px] h-[716px] flex flex-col overflow-hidden font-['Open_Sans','Noto_Sans',sans-serif] text-[11.5px] text-[#1b1b2b] select-none">

  <!-- title bar -->
  <div class="h-[22px] shrink-0 bg-[#4a4a48] flex items-center text-[#e4e4e4]">
    <svg class="w-[15px] h-[15px] ml-0.5 border border-[#b8b8b8]"><use href="#app"/></svg>
    <span class="ml-[5px] tracking-[-0.22px]">CATIA V5 - [2.CATPart]</span>
    <svg class="ml-auto mr-[3px] w-[106px] h-4" viewBox="0 0 106 16" fill="none" stroke="#eee" stroke-width="1.1"><path d="M0 8.500H10M43.500 6.500H50.500V13.500H43.500ZM45.500 6.500V4.500H52.500V11.500H50.500M87 3L96 12M96 3L87 12"/></svg>
  </div>

  <!-- menu bar -->
  <div class="h-[18px] shrink-0 bg-[#cfcfe7] flex items-center tracking-[-0.3px]">
    <svg class="w-[18px] h-[16px]"><use href="#app"/></svg>
    <div class="w-[46px] h-full pl-2 bg-[#fde5b8] leading-[17px]"><u>S</u>tart</div>
    <div class="w-[94px] pl-[7px] whitespace-nowrap tracking-[-0.32px]">ENOVIA V5 VPM</div>
    <div class="w-[39px] pl-[7px]"><u>F</u>ile</div>
    <div class="w-[41px] pl-[7px]"><u>E</u>dit</div>
    <div class="w-[46px] pl-[7px]"><u>V</u>iew</div>
    <div class="w-[50px] pl-[7px]"><u>I</u>nsert</div>
    <div class="w-[50px] pl-[7px]"><u>T</u>ools</div>
    <div class="w-[64px] pl-[7px]"><u>W</u>indow</div>
    <div class="w-[50px] pl-[7px]"><u>H</u>elp</div>
    <div class="ml-auto w-[49px] h-full bg-white">
      <svg class="w-[49px] h-[18px]" viewBox="0 0 49 18" fill="none" stroke="#666" stroke-width="1.400"><path d="M5 12H10M23 9H29V13H23ZM25 9V6H31V10H29M42 7L47 12M47 7L42 12"/></svg>
    </div>
  </div>

  <!-- main toolbar -->
  <div class="h-[35px] shrink-0 flex items-center pt-[3px] bg-linear-to-b from-white via-[#d2d2e8] to-[#b0b0c4] border-b-2 border-[#77777f]">
    <i class="shrink-0 w-[3px] h-4 ml-[4px] mb-3 border-l border-white border-r border-r-[#8c8c98]"></i>
    <div class="flex gap-1 ml-2" id="combos"></div>
    <div class="flex items-center h-full" id="main-icons"></div>
  </div>

  <div class="h-[550px] shrink-0 flex">
    <!-- tree scroller -->
    <div class="w-[18px] shrink-0 flex flex-col border-l-2 border-[#8c8cb0] bg-[#242245]">
      <div class="h-[20px] flex justify-center items-center bg-[#2c2a5c]"><svg class="w-3 h-3" viewBox="0 0 12 12"><path d="M6 1L11 11H1Z" fill="#000"/></svg></div>
      <div class="h-[87px] bg-[#27254c] border-b border-[#8c8cb0]"></div>
      <div class="h-[258px] bg-linear-to-r from-[#6866ac] to-[#464494]"></div>
      <div class="grow bg-linear-to-b from-[#29274c] to-[#8886b0]"></div>
      <div class="h-[18px] flex justify-center items-center bg-[#8480cc]"><svg class="w-3 h-3" viewBox="0 0 12 12"><path d="M1 1H11L6 11Z" fill="#000"/></svg></div>
    </div>

    <!-- 3D view -->
    <div class="relative w-[1228px] shrink-0 overflow-hidden bg-linear-[to_bottom,#000_0%,#0d0d0d_30%,#151515_52%,#1d1d1d_64%,#383838_74%,#666_86%,#989898_100%]">
      <svg class="absolute inset-0 w-full h-full" viewBox="18 75 1228 550">
        <defs>
          <linearGradient id="lblk"><stop offset="0" stop-color="#f000f0"/><stop offset=".45" stop-color="#e000e0"/><stop offset=".55" stop-color="#c400c4"/><stop offset="1" stop-color="#4c004c"/></linearGradient>
          <linearGradient id="rblk"><stop offset="0" stop-color="#d800d8"/><stop offset=".3" stop-color="#f000f0"/><stop offset=".55" stop-color="#c000c0"/><stop offset="1" stop-color="#780078"/></linearGradient>
          <linearGradient id="lcol"><stop offset="0" stop-color="#f400f4"/><stop offset=".45" stop-color="#e400e4"/><stop offset=".55" stop-color="#a800a8"/><stop offset="1" stop-color="#480048"/></linearGradient>
          <linearGradient id="rcol"><stop offset="0" stop-color="#f400f4"/><stop offset=".5" stop-color="#d800d8"/><stop offset="1" stop-color="#780078"/></linearGradient>
          <linearGradient id="lin"><stop offset="0" stop-color="#780078"/><stop offset="1" stop-color="#c800c8"/></linearGradient>
          <linearGradient id="tstrip" x1="0" y1="0" x2="0" y2="1"><stop offset="0" stop-color="#8c008c"/><stop offset="1" stop-color="#c000c0"/></linearGradient>
          <linearGradient id="bstrip" x1="0" y1="0" x2="0" y2="1"><stop offset="0" stop-color="#d400d4"/><stop offset=".5" stop-color="#f000f0"/><stop offset="1" stop-color="#9c009c"/></linearGradient>
          <linearGradient id="ring" x1="0" y1="0" x2="1" y2="1"><stop offset="0" stop-color="#680068"/><stop offset=".45" stop-color="#980098"/><stop offset=".75" stop-color="#e000e0"/><stop offset="1" stop-color="#f000f0"/></linearGradient>
        </defs>
        <!-- part -->
        <path d="M320 166H836V180H837V265H822V398H837V484H836V497H320V398H335V265H320Z" fill="#c800c8"/>
        <rect x="320" y="166" width="516" height="13" fill="#d000d0"/>
        <rect x="812" y="166" width="24" height="13" fill="#a800a8"/>
        <rect x="373" y="180" width="410" height="8" fill="url(#tstrip)"/>
        <rect x="320" y="180" width="53" height="85" fill="url(#lblk)"/>
        <rect x="320" y="398" width="53" height="86" fill="url(#lblk)"/>
        <rect x="373" y="188" width="13" height="77" fill="url(#lin)"/>
        <rect x="373" y="398" width="13" height="76" fill="url(#lin)"/>
        <rect x="783" y="180" width="54" height="85" fill="url(#rblk)"/>
        <rect x="783" y="398" width="54" height="86" fill="url(#rblk)"/>
        <rect x="771" y="188" width="12" height="77" fill="#e800e8"/>
        <rect x="771" y="398" width="12" height="76" fill="#e800e8"/>
        <rect x="335" y="265" width="23" height="133" fill="url(#lcol)"/>
        <rect x="798" y="265" width="24" height="133" fill="url(#rcol)"/>
        <rect x="358" y="265" width="35" height="133" fill="#121212"/>
        <rect x="763" y="265" width="35" height="133" fill="#121212"/>
        <rect x="373" y="474" width="410" height="10" fill="url(#bstrip)"/>
        <rect x="320" y="484" width="516" height="13" fill="url(#bstrip)"/>
        <g fill="none" stroke="#2c0030" stroke-width="1.500">
          <path d="M320 179.500H836M373.500 265V188.500H783V265M347 179V484M385.500 188V265M770.500 188V265M810 179V484M343 166V179M813 166V179"/>
          <path d="M320 265H424Q448 263 448 240V188.500M837 265H733Q709 263 709 240V188.500"/>
          <path d="M320 397.500H424Q448 399 448 422V474M837 397.500H733Q709 399 709 422V474"/>
          <path d="M373.500 398V483M385.500 398V474M770.500 398V474M783 398V474M373 474H783M320 483.500H837M320 496.500H836V484M813 484V497M343 484V497"/>
        </g>
        <path fill-rule="evenodd" fill="url(#ring)" d="M487 236H670Q710 236 710 276V386Q710 426 670 426H487Q447 426 447 386V276Q447 236 487 236ZM487 247Q458 247 458 276V386Q458 416 487 416H670Q700 416 700 386V276Q700 247 670 247Z"/>
        <g fill="none" stroke="#26002a" stroke-width="1.500">
          <rect x="447" y="236.500" width="262.500" height="190" rx="40"/>
          <rect x="453" y="243" width="251" height="177" rx="34"/>
          <rect x="458" y="247" width="241" height="169" rx="30"/>
          <path d="M487 236V247M670 236V247M487 416V426M670 416V426M447 276H458M699 276H710M447 386H458M699 386H710"/>
        </g>
        <!-- axes -->
        <g fill="none" stroke="#f6b8f6" stroke-width="1.300"><path d="M578.500 140V331H767M645.500 196V264H712"/></g>
        <circle cx="578" cy="331" r="2.500" fill="#fff"/>
        <g font-family="Open Sans" font-size="12" fill="#f0f0f0"><text x="577" y="141">z</text><text x="767" y="333">y</text><text x="1211" y="575" fill="#ddd">z</text><text x="1234" y="598" fill="#ddd">y</text></g>
        <path d="M1212.500 575V596.500H1233" fill="none" stroke="#ddd"/>
        <!-- compass -->
        <path d="M1139.500 98A46 46 0 0 1 1185 144H1139.500Z" fill="#002a2c" stroke="#d8d8f0" stroke-width="1.800"/>
        <path d="M1139.500 86V181M1115 182H1174" stroke="#d8d8e8" stroke-width="1.800"/>
        <circle cx="1139.500" cy="86" r="3.300" fill="#d8d8f0"/><rect x="1135.500" y="177.500" width="8.500" height="8.500" fill="#d80000"/>
        <g font-family="Open Sans" font-size="12.500" fill="#d8d020"><text x="1147" y="87">z</text><text x="1150" y="145">x</text><text x="1193" y="146">y</text></g>
        <!-- tree branches -->
        <g fill="none" stroke="#e2e2e2" stroke-width="2"><path d="M24 75V80M29 85H36M41 94V625M41 110H50M41 133H53M58 141V159H70M75 168V544M75 181H86M92 189V205H103M75 229H86M75 254H86M75 278H86M92 286V302H103M75 326H86M92 334V350H103M75 374H86M92 382V422H103M92 398H103M75 447H86M92 455V471H103M75 494H86M92 502V519H103M75 542H86M92 550V567H103M41 590H53M58 598V615H68"/></g>
        <g id="knobs"></g>
      </svg>

      <div class="absolute left-0 top-0 text-[10.9px] tracking-[-0.27px] leading-[14px] text-[#f0f0f0] font-['Noto_Sans','Open_Sans',sans-serif]" id="tree"></div>
      <div id="windows"></div>

      <!-- watermark -->
      <svg class="absolute inset-0 w-full h-full" viewBox="18 75 1228 550">
        <g fill="#fff" fill-opacity=".42" stroke="#fff" stroke-opacity=".75" stroke-width=".9" font-family="Liberation Serif" font-size="47">
          <text x="384" y="375" font-family="Noto Sans CJK SC" font-weight="300" font-size="48" textLength="158">莫西网</text>
          <text x="541" y="375" textLength="80" lengthAdjust="spacingAndGlyphs">www</text>
          <text x="622" y="375">.</text>
          <text x="650" y="375">3</text><text x="676" y="375">d</text>
          <text x="702" y="375" textLength="26" lengthAdjust="spacingAndGlyphs">m</text>
          <text x="730" y="375">o</text><text x="757" y="375">x</text><text x="785" y="375">.</text>
          <text x="812" y="375">c</text><text x="838" y="375">o</text>
          <text x="865" y="375" textLength="27" lengthAdjust="spacingAndGlyphs">m</text>
        </g>
        <g fill="#3c3a50" fill-opacity=".2"><circle cx="525" cy="522" r="56"/><rect x="617" y="472" width="99" height="99"/><rect x="752" y="445" width="54" height="154"/></g>
        <g fill="none" stroke="#d0cce0" stroke-opacity=".48"><circle cx="525" cy="522" r="61.500" stroke-width="11"/><rect x="611" y="466" width="110.500" height="111" stroke-width="12"/><rect x="746.500" y="439.500" width="65" height="165" stroke-width="11"/></g>
        <g fill="#dcd8e8" fill-opacity=".36"><circle cx="512" cy="554" r="12"/><rect x="624" y="545" width="20" height="20"/><path d="M760.500 453H780L762 588Z"/></g>
      </svg>
    </div>

    <!-- workbench bar -->
    <div class="w-[30px] shrink-0 border-l-4 border-white bg-[#cfcfe7] flex flex-col items-end overflow-hidden" id="right-icons"></div>
  </div>

  <!-- bottom toolbar -->
  <div class="h-[35px] shrink-0 flex items-center pt-[3px] border-t border-white bg-linear-to-b from-[#f4f4fa] via-[#d0d0e6] to-[#b4b4c8] border-b-2 border-b-[#85858d]">
    <div class="flex items-center h-full" id="bottom-icons"></div>
    <svg class="w-[40px] h-[34px] ml-3" viewBox="0 0 40 34"><path d="M11 3Q19 2 18 6T12 12" stroke="#d8303c" stroke-width="2" fill="none"/><path d="M7 12Q17 9 15 15Q12 22 3 24L9 14" stroke="#1c2c80" stroke-width="1.800" fill="none"/><path d="M26 8Q17 8 19 13Q24 19 17 23" stroke="#e88020" stroke-width="2" fill="none"/><text x="6" y="31" font-family="Liberation Sans" font-weight="bold" font-style="italic" font-size="9.500" textLength="32" fill="#1c2470">CATIA</text></svg>
  </div>

  <!-- status line -->
  <div class="h-[23px] shrink-0 flex items-center bg-[#cfcfe7] tracking-[-0.4px]">
    <span class="w-[937px] pl-[3px]">Select an object or a command</span>
    <div class="w-[280px] h-[18px] bg-white border-t-2 border-l-2 border-[#77777f]"></div>
    <div class="w-[29px] h-[20px] ml-0.5 flex justify-center items-center bg-[#dadaea] border-r border-b border-[#888]"><svg class="w-4 h-3" viewBox="0 0 16 12" fill="none" stroke="#999"><path d="M3 1H10V9H3ZM12 10H14V3M5 4H8"/></svg></div>
    <div class="w-[28px] h-[20px] flex justify-center items-center bg-[#e4e4f0] border-l border-white"><svg class="w-4 h-4" viewBox="0 0 16 16"><circle cx="7" cy="8" r="5.500" fill="#f0f8ff" stroke="#113" stroke-width="1.500"/><path d="M7 5V6M7 7V11" stroke="#1838c0" stroke-width="2"/><path d="M11 12L14 14V1" stroke="#113" fill="none" stroke-width="1.500"/></svg></div>
  </div>

  <!-- task bar -->
  <div class="h-[33px] shrink-0 flex items-center text-white bg-linear-to-r from-[#393534] from-60% to-[#1d1d1d] to-75%">
    <div class="w-[45px] h-full flex justify-center items-center bg-[#1c1c1c]"><svg class="w-4 h-4" viewBox="0 0 16 16" fill="#fff"><path d="M0 2.500L7 1.500V7.500H0ZM8 1.300L16 0V7.500H8ZM0 8.500H7V14.500L0 13.500ZM8 8.500H16V16L8 14.700Z"/></svg></div>
    <div class="w-[323px] h-full flex items-center bg-[#444444] text-[#b4b4b4] text-[14px]">
      <svg class="w-5 h-5 ml-[9px]" viewBox="0 0 20 20"><circle cx="10" cy="10" r="8" fill="none" stroke="#f4f4f4" stroke-width="2.500"/></svg>
      <span class="ml-[8px] pt-0.5 tracking-[-0.42px]">Type here to search</span>
      <svg class="w-3 h-4 ml-auto mr-[14px]" viewBox="0 0 12 16" fill="none" stroke="#bbb"><rect x="4" y="1" width="4" height="9" rx="2"/><path d="M1.500 7V9Q2 12 6 12.500Q10 12 10.500 9V7M6 13V15"/></svg>
    </div>
    <div class="w-[46px] flex justify-center"><svg class="w-4 h-4" viewBox="0 0 16 16" fill="none" stroke="#eee" stroke-width="1.300"><path d="M1 3V1H10V3M1 5H10V11H1ZM1 13V15H10V13M14 1V15M13 6H15"/></svg></div>
    <div class="w-[47px] flex justify-center"><svg class="w-[18px] h-[22px]" viewBox="0 0 18 22"><rect width="18" height="22" fill="#f4f4f4"/><rect x="2.500" y="2.500" width="13" height="4" fill="#333"/><g fill="#333"><path d="M3 9H6V11H3ZM7.500 9H10.500V11H7.500ZM12 9H15V11H12ZM3 13H6V15H3ZM7.500 13H10.500V15H7.500ZM12 13H15V15H12ZM3 17H6V19H3ZM7.500 17H10.500V19H7.500ZM12 17H15V19H12Z"/></g></svg></div>
    <div class="w-[46px] flex justify-center"><div class="w-5 h-[19px] bg-[#0a1440] border border-[#5078d8] text-[#7eb4ff] text-[11px] font-semibold leading-[16px] text-center">Ps</div></div>
    <div class="w-[46px] flex justify-center"><svg class="w-[22px] h-[22px]" viewBox="0 0 22 22"><path d="M1 3L8 0L20 2L17 10L21 20L4 19L0 12Z" fill="#b81818"/><path d="M2 3L9 1L20 2L12 6Z" fill="#e04838"/><text x="1" y="16" font-family="Liberation Sans" font-weight="bold" font-size="11" fill="#fff" textLength="19">SW</text><rect x="13" y="13" width="8" height="8" fill="#fff"/><path d="M15 19L19 15M16 15H19V18" stroke="#111" fill="none"/></svg></div>
    <div class="w-[46px] flex justify-center"><svg class="w-[22px] h-[22px]" viewBox="0 0 22 22"><path d="M1 3L8 0L20 2L17 10L20 16L4 16L0 12Z" fill="#b81818"/><path d="M2 3L9 1L20 2L12 6Z" fill="#e04838"/><text x="1" y="14" font-family="Liberation Sans" font-weight="bold" font-size="11" fill="#fff" textLength="19">SW</text><text x="4" y="21" font-family="Liberation Sans" font-weight="bold" font-size="7.500" fill="#fff" textLength="17">2018</text></svg></div>
    <div class="w-[46px] flex justify-center"><svg class="w-[22px] h-[20px]" viewBox="0 0 22 20"><path d="M4 1H21V13L17 16H4Z" fill="#b0b4b8"/><path d="M1 3H17V14L8 19H1Z" fill="#dce4ec" stroke="#889"/><path d="M3 11L6 7L9 11L12 5L15 10" stroke="#3890d0" fill="none" stroke-width="1.300"/></svg></div>
    <div class="w-[46px] h-full flex justify-center items-center bg-[#4e4a49]"><svg class="w-[22px] h-[21px] border border-[#e8e8e8]"><use href="#app"/></svg></div>
    <div class="w-[46px] flex justify-center"><svg class="w-[21px] h-[20px]" viewBox="0 0 21 20"><path d="M10 2H20V18H10Z" fill="#f8e8e0" stroke="#d04424"/><path d="M12 6H18M12 13H18M12 15.500H18" stroke="#d04424" stroke-width="1.300"/><path d="M0 2L12 0V20L0 18Z" fill="#d04424"/><text x="3" y="14" font-family="Liberation Sans" font-weight="bold" font-size="11" fill="#fff">P</text></svg></div>
    <svg class="ml-auto -mr-[3px] w-[82px] h-4" viewBox="0 0 82 16" fill="none" stroke="#eee" stroke-width="1.200"><path d="M1 11L6 6L11 11"/><path d="M27 5H35V12H26V9M35 7H37V10H35M24 3V5M27 3V5M23 5H28V8H23ZM25.500 8V12H29"/><path d="M45 14Q48 5 57 3M50 14Q52 9 57 8" stroke="#999"/><circle cx="48" cy="11" r="4" fill="#d02828" stroke="none"/><path d="M46.500 9.500L49.500 12.500M49.500 9.500L46.500 12.500"/><path d="M67 6H69L73 3V13L69 10H67ZM76 6L80 10M80 6L76 10"/></svg>
    <div class="w-[44px] text-center text-[11px] leading-[16px] tracking-[-0.2px]">ENG<br>IN</div>
    <div class="w-[58px] text-center text-[11px] leading-[16px] tracking-[-0.3px] whitespace-nowrap">10:51<br>29-09-2018</div>
    <svg class="w-4 h-4 ml-[14px] mr-[18px]" viewBox="0 0 16 16" fill="none" stroke="#eee" stroke-width="1.200"><path d="M1 1.500H15V12H11V15L8 12H1Z"/></svg>
  </div>
</div>

<script>
  // token: "name[+] extra classes", "|" = grip, "/" = separator, "+" = drop-down arrow
  function item(token, vertical) {
    var parts = token.split(' ');
    var name = parts.shift();
    var extra = parts.join(' ');
    if (name === '|') {
      return vertical
        ? '<i class="shrink-0 h-[3px] w-4 self-start ml-1 border-t border-t-white border-b border-b-[#9a9aa8] ' + extra + '"></i>'
        : '<i class="shrink-0 w-[3px] h-4 self-start mt-0.5 border-l border-l-white border-r border-r-[#8c8c98] ' + extra + '"></i>';
    }
    if (name === '/') {
      return vertical
        ? '<i class="shrink-0 h-[2px] w-full border-t border-t-[#a0a0b0] border-b border-b-white ' + extra + '"></i>'
        : '<i class="shrink-0 w-[2px] h-full border-l border-l-[#a0a0b0] border-r border-r-white ' + extra + '"></i>';
    }
    var arrow = '';
    if (name.slice(-1) === '+') {
      name = name.slice(0, -1);
      arrow = '<b class="absolute -right-[3px] bottom-0 border-x-[4px] border-t-[4px] border-x-transparent border-t-black"></b>';
    }
    return '<span class="relative shrink-0 w-[26px] h-[26px] flex items-center justify-center ' + extra + '">' +
      '<svg class="w-5 h-5 overflow-visible"><use href="#' + name + '"/></svg>' + arrow + '</span>';
  }
  function fill(id, list, vertical) {
    document.getElementById(id).innerHTML = list.map(function (t) { return item(t, vertical); }).join('');
  }

  var combos = [
    ['w-[58px]', ''], ['w-[59px]', 'Auto'], ['w-[59px]', 'Auto'], ['w-[59px]', 'Auto'],
    ['w-[38px]', 'Auto'], ['w-[38px] opacity-60', 'Auto'], ['w-[59px]', 'None']
  ];
  document.getElementById('combos').innerHTML = combos.map(function (c) {
    var value = c[1]
      ? '<span class="grow w-0 overflow-hidden pl-[2px] leading-[18px] tracking-[-0.2px]">' + c[1] + '</span>'
      : '<span class="grow m-[2px] ml-1 mr-2 bg-[#00ffff] border border-[#999]"></span>';
    return '<div class="h-[21px] flex bg-white border-t-2 border-l-2 border-r border-b border-t-[#77777f] border-l-[#77777f] border-r-[#ddd] border-b-[#ddd] ' + c[0] + '">' + value +
      '<span class="w-[15px] flex items-center justify-center bg-[#e2e2ee] border-r border-b border-[#777]"><b class="border-x-[4px] border-t-[4px] border-x-transparent border-t-black"></b></span></div>';
  }).join('');

  fill('main-icons', ['brush', 'wand', '| ml-4', 'dot ml-[5px]', 'curve', 'patch', 'diamond', '/ ml-1', 'cubesel ml-px', 'cubewire',
    '/ ml-1', 'crossbody+ ml-1', '/ ml-1', 'gridsel ml-1', '/ ml-0.5', 'points ml-[3px]', '| ml-4', 'mail ml-1', 'blocks', 'whats',
    '| ml-[11px]', 'colors ml-[7px]', '| ml-2.5', 'swirl ml-[5px]', 'hand', 'axis', 'tens', 'tealbox+ ml-0.5', 'cable', 'stack+', 'eraser ml-0.5']);

  fill('bottom-icons', ['| ml-[9px]', 'new ml-[5px]', 'open', 'save', 'print', 'cut', 'copy', 'paste', 'undo+', 'redo+ ml-0.5', 'help ml-[3px]',
    '| ml-[11px]', 'fx ml-1', 'speech', 'chain -ml-0.5', 'table+ -ml-0.5', 'nodes ml-0.5', 'lock+', 'brace', '| ml-3',
    'fly ml-1', 'fit ml-px', 'pan', 'rotate', 'zoomin', 'zoomout ml-px', 'normal', 'quad ml-px', 'cube+', 'cyl+ ml-[3px]', 'hide ml-px', 'swap',
    '| ml-[237px]', 'catalog ml-[3px]', '| ml-3', 'bowl ml-[3px]', '| ml-[30px]', 'scroll+ ml-1', 'scroll2+ ml-0.5']);

  fill('right-icons', ['| mt-1.5', 'wheel mt-[2px]', '| mt-3.5', 'pcs mt-1', '| mt-[87px]', 'cursor+ mt-[7px]', '| mt-2.5', 'treegray mt-[5px]',
    'treegray', 'treegray', 'treegray', '| mt-2', 'gearpair+ mt-[7px]', 'sheet+', 'treegear mt-[3px]'], true);

  // floating toolbars: title, placement, icons, vertical
  var wins = [
    ['PartDesign ...', 'left-[167px] top-[78px] w-[92px] h-[60px]', ['| ml-2', 'pd1 ml-px', 'pd2', 'pd3']],
    ['Reference E...', 'left-[197px] top-[140px] w-[92px] h-[60px]', ['| ml-2', 'dot ml-px', 'line', 'plane']],
    ['Analysis', 'left-[292px] top-[38px] w-[118px] h-[59px]', ['| ml-2', 'an1', 'an2 ml-px', 'an3', 'an4 ml-px']],
    ['Drafts', 'left-[610px] top-[20px] w-[93px] h-[60px]', ['| ml-2', 'draft ml-0.5', 'draft2', 'draft3 ml-px']],
    ['Dress-Up Features', 'left-[774px] top-[4px] w-[203px] h-[62px]', ['| ml-2', 'fillet+ ml-px', 'chamfer ml-0.5', 'draft+ ml-px', 'shell2 ml-px', 'thick', 'thread ml-px', 'removeface+']],
    ['A', 'left-[831px] top-[166px] w-[33px] h-[123px]', ['| mt-1', 'abc+ mt-[3px]', 'tag+ mt-[3px]', 'stamp mt-[1px]'], true],
    ['C', 'left-[959px] top-[166px] w-[32px] h-[93px]', ['| mt-1', 'cgray mt-[7px]', 'cbox'], true],
    ['S', 'left-[1007px] top-[158px] w-[33px] h-[69px]', ['| mt-1', 'layers2+ mt-[5px]'], true],
    ['S', 'left-[1054px] top-[39px] w-[33px] h-[70px]', ['| mt-1', 'sketcher+ mt-[6px]'], true],
    ['S', 'left-[1058px] top-[117px] w-[34px] h-[309px]', ['| mt-1', 'pad+ mt-[6px]', 'pocketb+ mt-0.5', 'shaft mt-0.5', 'groove', 'hole mt-px', 'rib mt-px', 'slot', 'stiff+ mt-px', 'loft mt-px', 'loft2 mt-px'], true],
    ['R', 'left-[1135px] top-[155px] w-[34px] h-[69px]', ['| mt-1', 'plane+ mt-[6px]'], true],
    ['T', 'left-[1001px] top-[246px] w-[34px] h-[167px]', ['| mt-1', 'trans+ mt-[5px]', '/ mt-[5px]', 'mirror mt-[3px]', 'grid9+', '/ mt-1', 'scale+ mt-[3px]'], true],
    ['Patterns', 'left-[859px] top-[307px] w-[93px] h-[60px]', ['| ml-2', 'grid9 ml-px', 'circpat ml-px', 'userpat']],
    ['Measure', 'left-[1037px] top-[442px] w-[93px] h-[59px]', ['| ml-2', 'measure ml-px', 'caliper ml-px', 'weight -ml-px']],
    ['R..', 'left-[932px] top-[475px] w-[41px] h-[59px]', ['| ml-[5px]', 'camera ml-1']],
    ['Boolean O...', 'left-[219px] top-[337px] w-[93px] h-[60px]', ['| ml-2', 'add ml-px', 'remove ml-px', 'intersect']],
    ['Boolean Operations', 'left-[203px] top-[405px] w-[136px] h-[62px]', ['| ml-2', 'assem ml-0.5', '/ ml-[3px]', 'remove+ ml-0.5', 'uniontrim ml-0.5', '/ ml-1', 'lump ml-0.5']]
  ];
  var html = wins.map(function (w) {
    var body = w[3]
      ? 'flex flex-col items-center bg-linear-to-r from-[#f0f0fa] via-[#d4d4ea] to-[#c4c4da]'
      : 'flex items-center bg-linear-to-b from-[#fafaff] via-[#d4d4ea] to-[#b8b8cc]';
    return '<div class="absolute flex flex-col ' + w[1] + '">' +
      '<div class="h-[29px] shrink-0 flex items-start justify-between bg-[#4b4b49] text-[#e0e0e0] border-b border-[#555] pt-[7px] pl-[7px] pr-px whitespace-nowrap">' +
      '<span class="w-0 leading-[14px] tracking-[-0.42px]">' + w[0] + '</span>' +
      '<span class="relative w-[18px] h-[18px] bg-[#c64a4e] text-white text-[10px] font-bold text-center leading-[16px]">x</span></div>' +
      '<div class="grow ' + body + '">' + w[2].map(function (t) { return item(t, w[3]); }).join('') + '</div></div>';
  }).join('');
  // active toolbar
  html += '<div class="absolute left-[841px] top-[95px] w-[106px] h-[66px] bg-[#a9c8e3] border border-[#c4dcf0] px-[5px] text-[#222]">' +
    '<div class="h-[27px] flex items-center justify-between"><span class="pt-1.5 tracking-[-0.42px]">Pads</span>' +
    '<span class="w-[15px] h-[15px] mr-0.5 mt-1 bg-[#c64a4e] text-white text-[10px] font-bold text-center leading-[13px]">x</span></div>' +
    '<div class="h-[32px] flex items-center bg-linear-to-b from-[#fafaff] to-[#c4c4da] border-b-2 border-[#888890]">' +
    ['| ml-1', 'pad ml-[5px]', 'padgray ml-px', 'multigray'].map(function (t) { return item(t); }).join('') + '</div></div>';
  document.getElementById('windows').innerHTML = html;

  // specification tree
  var rows = [
    ['pl-[15px]', 'gear', 'PartBody'], ['pl-[33px]', 'ogs', 'Ordered Geometrical Set.2'], ['pl-[33px]', 'add', 'Add.1'],
    ['pl-[51px]', 'gear2', 'Body.2'], ['pl-[67px]', 'pad', 'Pad.1'], ['pl-[85px]', 'sketch', 'Sketch.1'],
    ['pl-[67px]', 'sketch', 'Sketch.2'], ['pl-[67px]', 'pad', 'Pad.2'], ['pl-[67px]', 'draft', 'Draft.1'],
    ['pl-[85px]', 'param', 'Angle=45deg'], ['pl-[67px]', 'pocket', 'Pocket.1'], ['pl-[85px]', 'sketch', 'Sketch.3'],
    ['pl-[67px]', 'shell', 'Shell.1'], ['pl-[85px]', 'param', 'InsideThickness=0.073in'], ['pl-[85px]', 'param', 'OutsideThickness=0in'],
    ['pl-[67px]', 'fillet', 'EdgeFillet.4'], ['pl-[85px]', 'param', 'Radius=0.125in'], ['pl-[67px]', 'fillet', 'EdgeFillet.5'],
    ['pl-[85px]', 'param', 'Radius=0.03in'], ['pl-[67px]', 'fillet', 'EdgeFillet.6'], ['pl-[85px]', 'param', 'Radius=0.03in'],
    ['pl-[33px]', 'add', 'Add.2'], ['pl-[51px]', 'gear2', 'Body.3']
  ];
  document.getElementById('tree').innerHTML = rows.map(function (r) {
    return '<div class="h-[24.1px] flex items-center gap-px ' + r[0] + '"><svg class="w-5 h-[19px] mb-1 shrink-0"><use href="#' + r[1] + '"/></svg>' +
      '<span class="px-px bg-black whitespace-nowrap">' + r[2] + '</span></div>';
  }).join('');

  var knobs = [[24, 85, 0], [41, 133, 0], [58, 157, 0], [75, 181, 0], [92, 205, 1], [75, 229, 1], [75, 278, 0], [75, 326, 0], [92, 350, 1],
    [75, 374, 0], [75, 447, 0], [75, 494, 0], [75, 542, 0], [41, 590, 0], [58, 615, 1]];
  document.getElementById('knobs').innerHTML = knobs.map(function (k) {
    return '<circle cx="' + k[0] + '" cy="' + k[1] + '" r="5.2" fill="#8c8c8c"/><path d="M' + (k[0] - 4) + ' ' + k[1] + 'h8' +
      (k[2] ? 'm-4 -4v8' : '') + '" stroke="#000" stroke-width="1.8" fill="none"/>';
  }).join('');
</script>
</body>
</html>
